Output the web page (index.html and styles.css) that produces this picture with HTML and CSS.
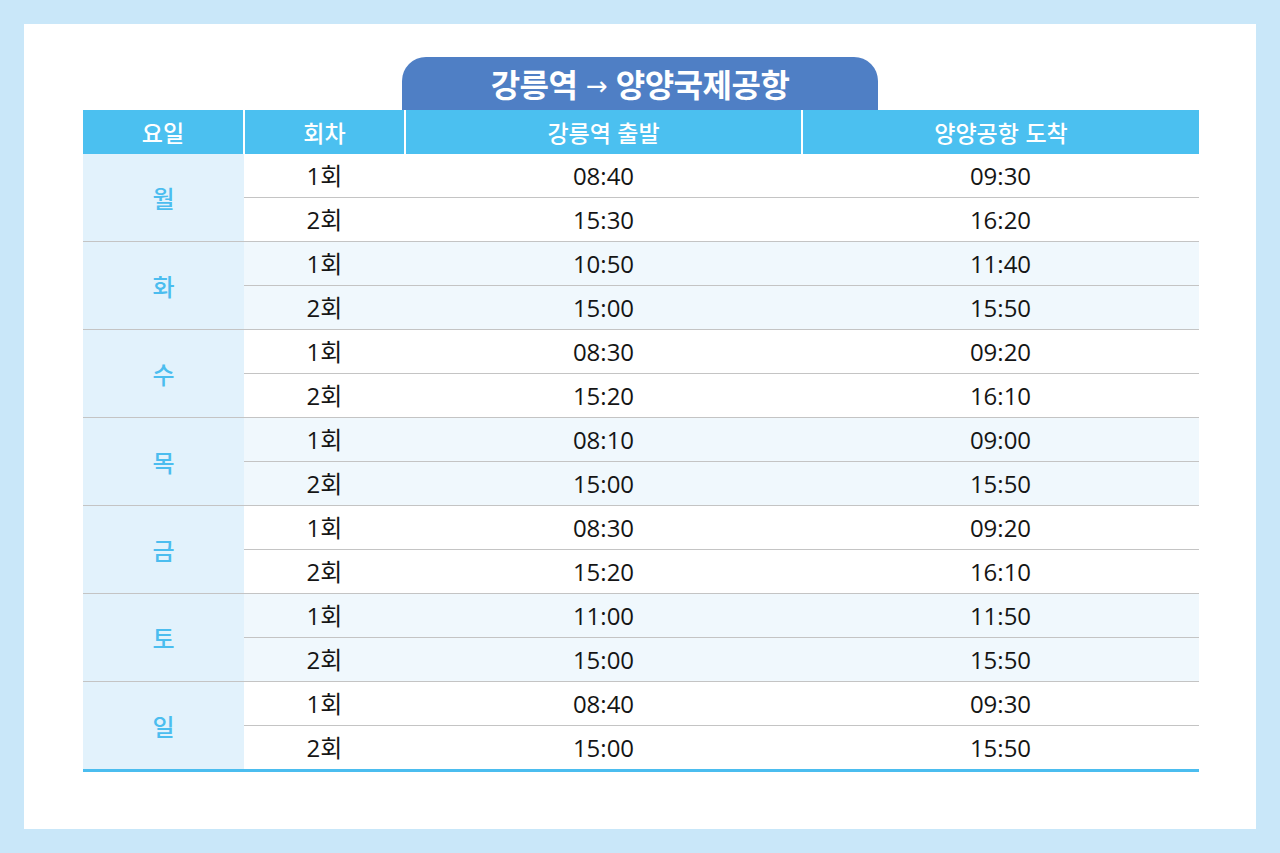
FILE: index.html
```html
<!DOCTYPE html>
<html lang="ko">
<head>
<meta charset="utf-8">
<link rel="stylesheet" href="styles.css">
</head>
<body>
<div class="card">
  <div class="wrap">
    <div class="tab">강릉역 <span class="arrow">→</span> 양양국제공항</div>
    <table class="tt">
      <colgroup><col class="c1"><col class="c2"><col class="c3"><col class="c4"></colgroup>
      <thead>
        <tr><th>요일</th><th>회차</th><th>강릉역 출발</th><th>양양공항 도착</th></tr>
      </thead>
      <tbody class="g">
        <tr><td class="day" rowspan="2">월</td><td>1회</td><td>08:40</td><td>09:30</td></tr>
        <tr class="last"><td>2회</td><td>15:30</td><td>16:20</td></tr>
      </tbody>
      <tbody class="g alt">
        <tr><td class="day" rowspan="2">화</td><td>1회</td><td>10:50</td><td>11:40</td></tr>
        <tr class="last"><td>2회</td><td>15:00</td><td>15:50</td></tr>
      </tbody>
      <tbody class="g">
        <tr><td class="day" rowspan="2">수</td><td>1회</td><td>08:30</td><td>09:20</td></tr>
        <tr class="last"><td>2회</td><td>15:20</td><td>16:10</td></tr>
      </tbody>
      <tbody class="g alt">
        <tr><td class="day" rowspan="2">목</td><td>1회</td><td>08:10</td><td>09:00</td></tr>
        <tr class="last"><td>2회</td><td>15:00</td><td>15:50</td></tr>
      </tbody>
      <tbody class="g">
        <tr><td class="day" rowspan="2">금</td><td>1회</td><td>08:30</td><td>09:20</td></tr>
        <tr class="last"><td>2회</td><td>15:20</td><td>16:10</td></tr>
      </tbody>
      <tbody class="g alt">
        <tr><td class="day" rowspan="2">토</td><td>1회</td><td>11:00</td><td>11:50</td></tr>
        <tr class="last"><td>2회</td><td>15:00</td><td>15:50</td></tr>
      </tbody>
      <tbody class="g end">
        <tr><td class="day" rowspan="2">일</td><td>1회</td><td>08:40</td><td>09:30</td></tr>
        <tr class="last"><td>2회</td><td>15:00</td><td>15:50</td></tr>
      </tbody>
    </table>
  </div>
</div>
</body>
</html>
```
FILE: styles.css
```css
html, body {
  margin: 0;
  padding: 0;
}
body {
  background: #c9e7f9;
  width: 1280px;
  height: 853px;
  overflow: hidden;
  font-family: "Noto Sans CJK KR", "Noto Sans", sans-serif;
}
.card {
  margin: 24px;
  height: 805px;
  background: #ffffff;
  box-sizing: border-box;
  padding: 33px 0 0 59px;
}
.wrap {
  width: 1116px;
}
.tab {
  margin-left: 319px;
  width: 476px;
  height: 53px;
  background: #4f7fc5;
  border-radius: 24px 24px 0 0;
  color: #ffffff;
  font-size: 32px;
  font-weight: 700;
  line-height: 53px;
  text-align: center;
  letter-spacing: -0.5px;
}
.tab .arrow {
  font-weight: 400;
  font-size: 26px;
  font-family: "DejaVu Sans", sans-serif;
  position: relative;
  top: -2px;
}
.tt {
  width: 1116px;
  border-collapse: collapse;
  table-layout: fixed;
}
.c1 { width: 161px; }
.c2 { width: 161px; }
.c3 { width: 397px; }
.c4 { width: 397px; }
.tt th {
  height: 44px;
  padding: 0;
  background: #4bc0f0;
  color: #ffffff;
  font-size: 23px;
  font-weight: 500;
  line-height: 26px;
  border-left: 2px solid #ffffff;
  text-align: center;
}
.tt th:first-child {
  border-left: none;
}
.tt td {
  height: 43px;
  padding: 0;
  text-align: center;
  font-family: "Open Sans", "Noto Sans CJK KR", sans-serif;
  font-size: 24px;
  line-height: 26px;
  color: #151515;
  border-bottom: 1px solid #c4c4c4;
  background: #ffffff;
}
.tt .alt td {
  background: #f0f8fd;
}
.tt td.day,
.tt .alt td.day {
  background: #e2f2fc;
  color: #4bbdef;
  font-family: "Noto Sans CJK KR", sans-serif;
  font-weight: 500;
  font-size: 24px;
}
.tt .end tr.last td,
.tt .end td.day {
  border-bottom: 3px solid #4bbdef;
}
```
